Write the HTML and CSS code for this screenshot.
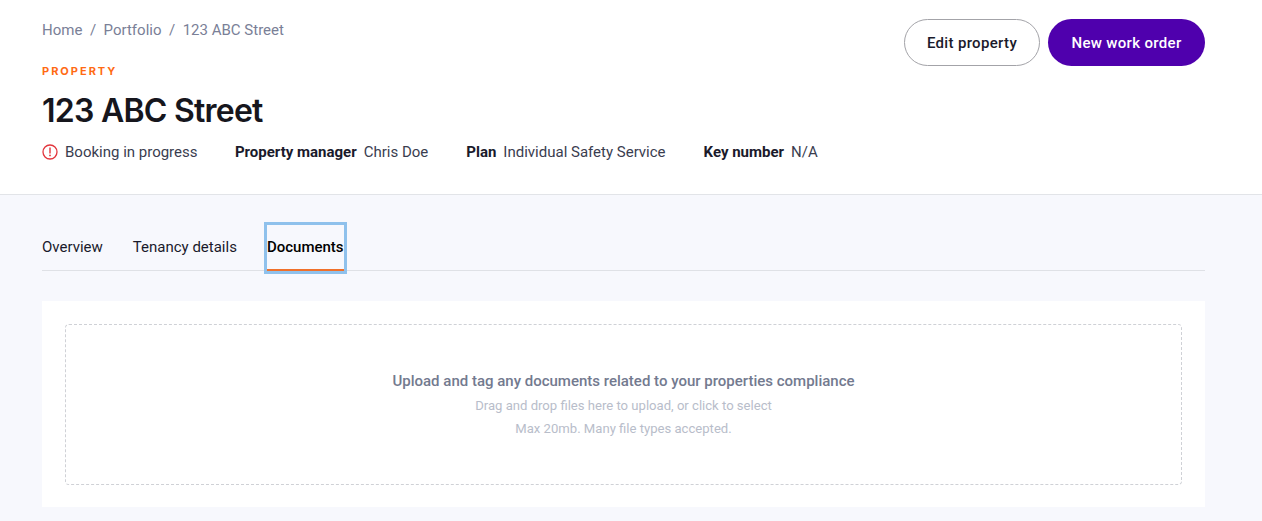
FILE: index.html
```html
<!DOCTYPE html>
<html lang="en">
<head>
<meta charset="utf-8">
<title>123 ABC Street</title>
<link rel="stylesheet" href="styles.css">
</head>
<body>
<header class="header">
  <div class="header-main">
    <nav class="crumbs"><a>Home</a><span class="sep">/</span><a>Portfolio</a><span class="sep">/</span><a>123 ABC Street</a></nav>
    <div class="eyebrow">PROPERTY</div>
    <h1 class="title">123 ABC Street</h1>
    <div class="meta">
      <div class="meta-item status">
        <svg class="alert" width="16" height="16" viewBox="0 0 16 16" fill="none"><circle cx="8" cy="8" r="7" stroke="#e2353c" stroke-width="1.3"/><path d="M8 4v5" stroke="#e2353c" stroke-width="1.4" stroke-linecap="round"/><circle cx="8" cy="11.4" r=".9" fill="#e2353c"/></svg>
        <span>Booking in progress</span>
      </div>
      <div class="meta-item"><b>Property manager</b><span>Chris Doe</span></div>
      <div class="meta-item"><b>Plan</b><span>Individual Safety Service</span></div>
      <div class="meta-item"><b>Key number</b><span>N/A</span></div>
    </div>
  </div>
  <div class="actions">
    <button class="btn btn-outline">Edit property</button>
    <button class="btn btn-primary">New work order</button>
  </div>
</header>
<main class="content">
  <div class="tabs">
    <a class="tab">Overview</a>
    <a class="tab">Tenancy details</a>
    <a class="tab active">Documents</a>
  </div>
  <section class="card">
    <div class="drop">
      <p class="drop-title">Upload and tag any documents related to your properties compliance</p>
      <p class="drop-line">Drag and drop files here to upload, or click to select</p>
      <p class="drop-line">Max 20mb. Many file types accepted.</p>
    </div>
  </section>
</main>
</body>
</html>
```
FILE: styles.css
```css
* { box-sizing: border-box; }
html, body { margin: 0; height: 100%; }
body { background: #f7f8fd; font-family: Roboto, sans-serif; color: #1a1a2b; overflow: hidden; }
.header { height: 195px; background: #fff; border-bottom: 1px solid #e2e4e8; padding: 19px 57px 0 42px; display: flex; justify-content: space-between; align-items: flex-start; }
.crumbs { font-size: 15px; line-height: 22px; color: #7a8097; display: flex; }
.sep { margin: 0 7.5px; }
.eyebrow { margin-top: 23px; font-family: Inter, sans-serif; font-size: 11px; line-height: 14px; letter-spacing: 2px; font-weight: 700; color: #ff6a13; }
.title { margin: 13px 0 0; font-family: Inter, sans-serif; font-size: 32px; line-height: 40px; font-weight: 600; letter-spacing: -.75px; color: #16161d; }
.meta { display: flex; gap: 38px; margin-top: 10px; font-size: 15px; line-height: 22px; color: #3a3d4f; }
.meta-item { display: flex; gap: 7px; align-items: center; }
.meta-item b { font-weight: 700; color: #1a1a2b; }
.status { margin-right: -.6px; }
.alert { display: block; }
.actions { display: flex; gap: 8px; }
.btn { height: 47px; border-radius: 24px; font-family: Roboto, sans-serif; font-size: 15px; font-weight: 500; letter-spacing: .33px; }
.btn-outline { width: 136px; background: #fff; border: 1px solid #a3a3a8; color: #1a1a2b; }
.btn-primary { width: 157px; background: #4f00ad; border: 0; color: #fff; }
.content { padding: 28px 57px 0 42px; }
.tabs { display: flex; gap: 30px; height: 48px; align-items: flex-end; border-bottom: 1px solid #dfe1e6; font-size: 15px; }
.tab { line-height: 44px; height: 46px; margin-bottom: -1px; color: #1a1a2b; }
.tab.active { font-weight: 500; color: #000; border-bottom: 2px solid #f0702a; outline: 3px solid #8fc1ec; }
.card { margin-top: 30px; height: 206px; background: #fff; padding: 23px; }
.drop { height: 161px; border: 1px dashed #cfd1d6; border-radius: 4px; display: flex; flex-direction: column; align-items: center; justify-content: center; }
.drop p { margin: 0; }
.drop-title { font-size: 15px; line-height: 22px; font-weight: 500; color: #737a8f; padding-top: 1px; margin-bottom: 2px !important; }
.drop-line { font-size: 13.1px; line-height: 23px; color: #b8bdca; }
```
